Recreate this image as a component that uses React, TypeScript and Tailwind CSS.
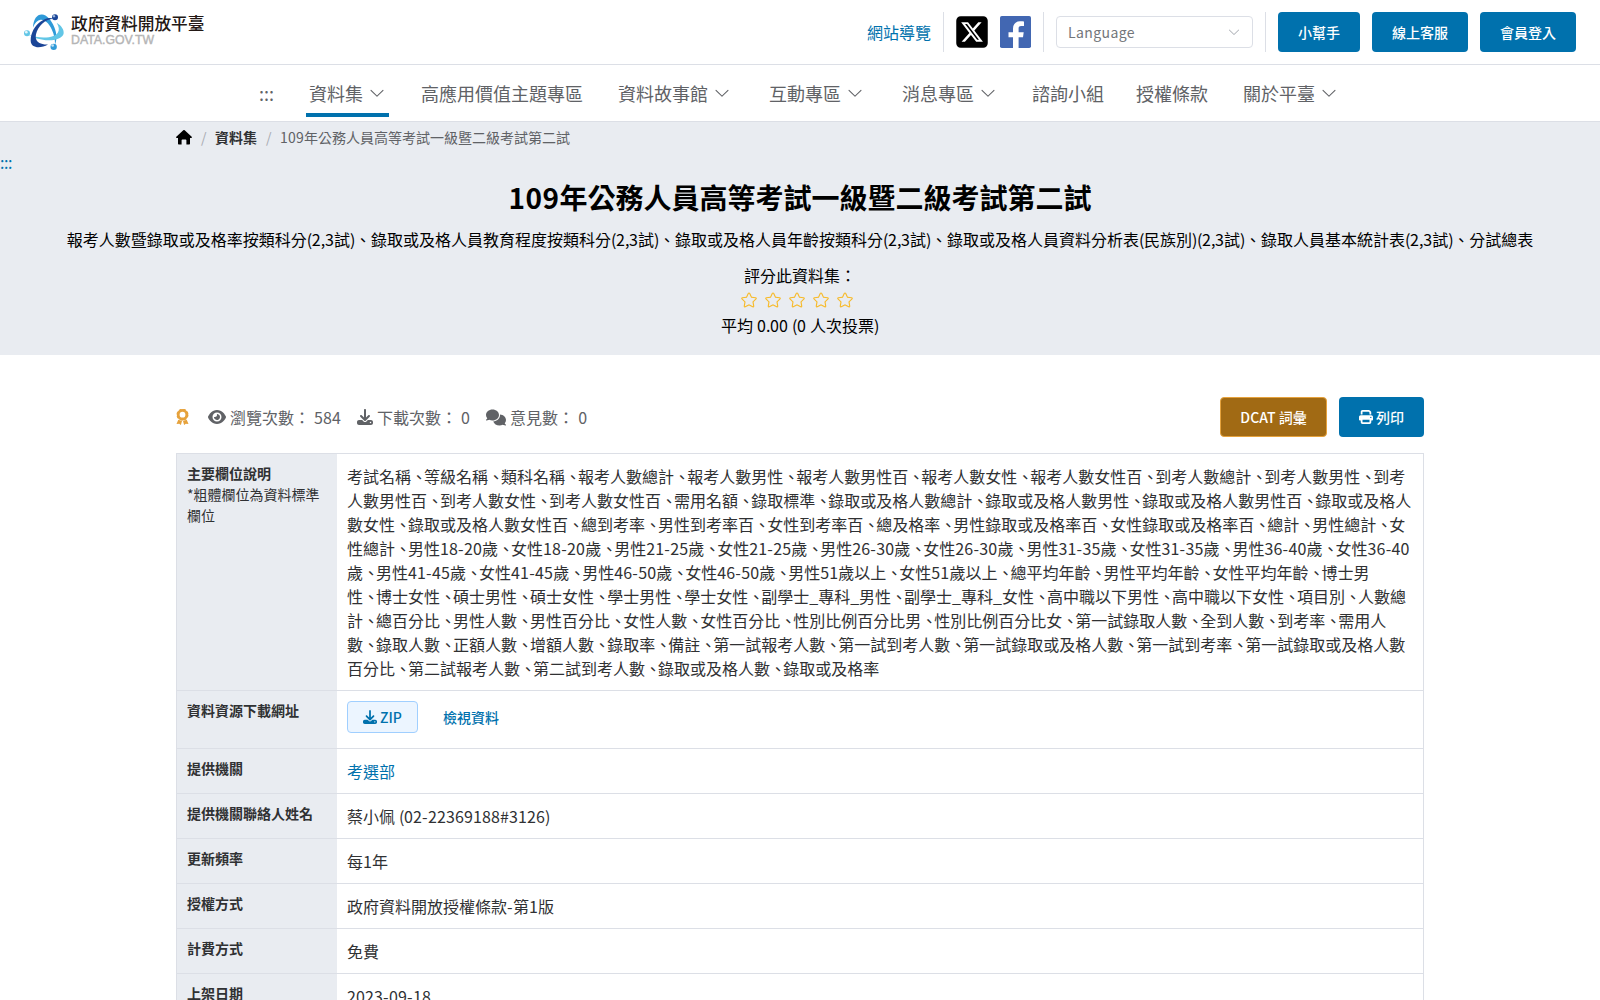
import React from "react";
import { FaEye, FaDownload, FaComments, FaPrint, FaSquareXTwitter } from "react-icons/fa6";

function ArrowDown({ className }: { className: string }) {
  return (
    <svg viewBox="0 0 1024 1024" fill="currentColor" className={className} aria-hidden="true">
      <path d="M831.872 340.864 512 652.672 192.128 340.864a30.592 30.592 0 0 0-42.752 0 29.12 29.12 0 0 0 0 41.6L489.664 714.24a32 32 0 0 0 44.672 0l340.288-331.712a29.12 29.12 0 0 0 0-41.728 30.592 30.592 0 0 0-42.752 0z" />
    </svg>
  );
}

function Star() {
  return (
    <svg viewBox="0 0 1024 1024" fill="#f7ba2a" className="h-[18px] w-[18px]" aria-hidden="true">
      <path d="m512 747.84 228.16 119.936a6.4 6.4 0 0 0 9.28-6.72l-43.52-254.08 184.512-179.904a6.4 6.4 0 0 0-3.52-10.88l-255.104-37.12L517.76 147.904a6.4 6.4 0 0 0-11.52 0L392.192 379.072l-255.104 37.12a6.4 6.4 0 0 0-3.52 10.88L318.08 606.976l-43.584 254.08a6.4 6.4 0 0 0 9.28 6.72L512 747.84zM313.6 924.48a70.4 70.4 0 0 1-102.144-74.24l37.888-220.928L88.96 472.96A70.4 70.4 0 0 1 128 352.896l221.76-32.256 99.2-200.96a70.4 70.4 0 0 1 126.208 0l99.2 200.96 221.824 32.256a70.4 70.4 0 0 1 39.04 120.064L774.72 629.376l37.888 220.928a70.4 70.4 0 0 1-102.144 74.24L512 820.096l-198.4 104.32z" />
    </svg>
  );
}

function Logo() {
  return (
    <svg viewBox="0 0 120 110" className="h-[37px] w-10 shrink-0" aria-hidden="true">
      <path d="M27 40C28 14 40 0 54 1c14 1 28 16 37 38 8 20 8 38 2 52 0-16-2-30-10-46C74 27 62 16 50 17c-10 1-17 9-23 23Z" fill="#2f9ad8" />
      <path d="M98 26c14 9 22 20 21 31-2 16-28 23-54 21-22-2-40-8-52-16 20 7 42 10 62 7 26-4 38-18 23-43Z" fill="#62c6e6" />
      <path d="M88 14C62 16 42 36 36 60c-4 18 6 31 36 31-22 13-52 12-52-12 0-22 12-44 30-57 12-8 26-14 38-8Z" fill="#1b4597" />
      <circle cx="93" cy="9" r="9" fill="#1b4597" />
      <circle cx="90" cy="6" r="3.5" fill="#9db8dc" />
      <circle cx="9" cy="57" r="9" fill="#62c6e6" />
      <circle cx="7" cy="54" r="4" fill="#e3f6fb" />
      <circle cx="89" cy="98" r="9.5" fill="#2f9ad8" />
      <circle cx="86" cy="94" r="4" fill="#c2e4f5" />
    </svg>
  );
}

function FacebookIcon() {
  return (
    <svg viewBox="0 0 31 32" className="h-8 w-[31px]" aria-hidden="true">
      <rect width="31" height="32" rx="1.8" fill="#4267b2" />
      <path d="M13 32V21.3H8.500v-5H13v-3.800C13 7.900 15.800 5.200 20 5.200c2 0 3.600.2 4 .3V10h-2.800c-2.200 0-2.600 1-2.600 2.600v3.700h5.100l-.7 5h-4.400V32Z" fill="#fff" />
    </svg>
  );
}

function HomeIcon() {
  return (
    <svg viewBox="0 0 16 15" className="h-[15px] w-4" aria-hidden="true">
      <path d="M7.300.3a1 1 0 0 1 1.400 0l7 6.400c.5.5.2 1.300-.5 1.300H14v5.400c0 .7-.4 1.100-1 1.100h-2.600V10.300c0-.5-.3-.8-.8-.8H6.400c-.5 0-.8.3-.8.8v4.200H3c-.6 0-1-.4-1-1.100V8H.8C.1 8-.2 7.200.3 6.700Z" fill="#000" />
    </svg>
  );
}

function MedalIcon() {
  return (
    <svg viewBox="0 0 12 16" className="h-4 w-[13px]" aria-hidden="true">
      <circle cx="6" cy="5.700" r="4.300" fill="none" stroke="#e6a23c" strokeWidth="2.800" />
      <circle cx="6" cy="5.700" r="5.400" fill="none" stroke="#e6a23c" strokeWidth="1.200" strokeDasharray="2.700 1.540" />
      <path d="M1.800 10.800 5.500 12 4.400 16 2.700 14.700 0 15ZM10.200 10.800 6.500 12 7.600 16 9.300 14.700 12 15Z" fill="#e6a23c" />
    </svg>
  );
}

/** Spaces Latin characters so that each one fills a whole number of pixels at 16px. */
function Snap({ text }: { text: string }) {
  return (
    <>
      {text.split(/(\d+|[- ]+|[(),.]+)/).map((part, i) => {
        if (!part) return null;
        if (/^\d/.test(part)) return <span key={i} className="tracking-[0.12px]">{part}</span>;
        if (/^[- ]/.test(part)) return <span key={i} className="tracking-[0.43px]">{part}</span>;
        if (/^[(),.]/.test(part)) return <span key={i} className="tracking-[-0.43px]">{part}</span>;
        return <React.Fragment key={i}>{part}</React.Fragment>;
      })}
    </>
  );
}

const nav = [
  { text: "資料集", arrow: true, cls: "ml-[33px] w-[83px]", active: true },
  { text: "高應用價值主題專區", arrow: false, cls: "ml-[29px] w-[168px]" },
  { text: "資料故事館", arrow: true, cls: "ml-[29px] w-[119px]" },
  { text: "互動專區", arrow: true, cls: "ml-8 w-[101px]" },
  { text: "消息專區", arrow: true, cls: "ml-8 w-[101px]" },
  { text: "諮詢小組", arrow: false, cls: "ml-[29px] w-[78px]" },
  { text: "授權條款", arrow: false, cls: "ml-[26px] w-[78px]" },
  { text: "關於平臺", arrow: true, cls: "ml-[29px] w-[101px]" },
];

const fields =
  "考試名稱 等級名稱 類科名稱 報考人數總計 報考人數男性 報考人數男性百 報考人數女性 報考人數女性百 到考人數總計 到考人數男性 到考人數男性百 到考人數女性 到考人數女性百 需用名額 錄取標準 錄取或及格人數總計 錄取或及格人數男性 錄取或及格人數男性百 錄取或及格人數女性 錄取或及格人數女性百 總到考率 男性到考率百 女性到考率百 總及格率 男性錄取或及格率百 女性錄取或及格率百 總計 男性總計 女性總計 男性18-20歲 女性18-20歲 男性21-25歲 女性21-25歲 男性26-30歲 女性26-30歲 男性31-35歲 女性31-35歲 男性36-40歲 女性36-40歲 男性41-45歲 女性41-45歲 男性46-50歲 女性46-50歲 男性51歲以上 女性51歲以上 總平均年齡 男性平均年齡 女性平均年齡 博士男性 博士女性 碩士男性 碩士女性 學士男性 學士女性 副學士_專科_男性 副學士_專科_女性 高中職以下男性 高中職以下女性 項目別 人數總計 總百分比 男性人數 男性百分比 女性人數 女性百分比 性別比例百分比男 性別比例百分比女 第一試錄取人數 全到人數 到考率 需用人數 錄取人數 正額人數 增額人數 錄取率 備註 第一試報考人數 第一試到考人數 第一試錄取或及格人數 第一試到考率 第一試錄取或及格人數百分比 第二試報考人數 第二試到考人數 錄取或及格人數 錄取或及格率".split(
    " ",
  );

function Row({ label, note, children }: { label: string; note?: string; children: React.ReactNode }) {
  return (
    <div className="flex border-t border-[#dcdfe6]">
      <div className="w-40 shrink-0 bg-[#e9ecf1] px-[10px] pt-[9px] pb-[11px] text-[14px] leading-[21px] text-[#303133]">
        <div className="font-bold">{label}</div>
        {note && <div>{note}</div>}
      </div>
      <div className="min-w-0 flex-1 p-[10px] text-base leading-6">{children}</div>
    </div>
  );
}

function BlueButton({ children, className }: { children: React.ReactNode; className: string }) {
  return (
    <button className={`flex h-10 items-center justify-center rounded bg-[#0071ad] text-[14px] font-medium text-white ${className}`}>
      {children}
    </button>
  );
}

export default function App() {
  return (
    <div className="h-[1000px] w-[1600px] overflow-hidden bg-white font-['Noto_Sans_CJK_TC',sans-serif] text-base leading-6 text-[#303133]">
      <header className="flex h-[65px] items-center justify-between border-b border-[#dcdfe6] px-6">
        <div className="flex items-center gap-[7px]">
          <Logo />
          <div className="-mt-[5px]">
            <div className="text-[16.7px] leading-[20px] font-medium text-[#231815]">政府資料開放平臺</div>
            <div className="mt-px font-['Liberation_Sans',sans-serif] text-[12.3px] leading-[13px] text-[#b5b5b6] [-webkit-text-stroke:0.4px_#b5b5b6]">DATA.GOV.TW</div>
          </div>
        </div>
        <div className="flex items-center">
          <a className="text-[#0071ad]">網站導覽</a>
          <div className="mx-3 h-10 w-px bg-[#dcdfe6]" />
          <div className="h-8 w-8 overflow-hidden text-black">
            <FaSquareXTwitter className="-mx-[2px] -mt-[2px] h-9 w-9" />
          </div>
          <div className="ml-3">
            <FacebookIcon />
          </div>
          <div className="mx-3 h-10 w-px bg-[#dcdfe6]" />
          <div className="flex h-8 w-[197px] items-center justify-between rounded border border-[#dcdfe6] pr-[11px] pl-[11px] text-[14px] tracking-[0.4px] text-[#73767a]">
            <span>Language</span>
            <ArrowDown className="h-[14px] w-[14px] text-[#a8abb2]" />
          </div>
          <div className="mx-3 h-10 w-px bg-[#dcdfe6]" />
          <BlueButton className="w-[82px]">小幫手</BlueButton>
          <BlueButton className="ml-3 w-24">線上客服</BlueButton>
          <BlueButton className="ml-3 w-24">會員登入</BlueButton>
        </div>
      </header>

      <nav className="flex h-[57px] border-b border-[#dcdfe6] pl-[259px] text-[18px] text-[#606266]">
        <span className="mt-4 w-[14px]">:::</span>
        {nav.map((n) => (
          <div key={n.text} className={`flex flex-col justify-between whitespace-nowrap ${n.cls}`}>
            <div className="mt-4 flex h-6 items-center pl-[3px]">
              {n.text}
              {n.arrow && <ArrowDown className="ml-[5px] h-[18px] w-[18px]" />}
            </div>
            {n.active && <div className="mb-1 h-1 bg-[#0071ad]" />}
          </div>
        ))}
      </nav>

      <section className="h-[233px] bg-[#e9ecf1] text-black">
        <div className="flex h-[30px] items-center pl-[176px] text-[14px] leading-[14px]">
          <HomeIcon />
          <span className="mx-[9px] w-[5px] text-center text-[#a8abb2]">/</span>
          <span className="font-bold text-[#303133]">資料集</span>
          <span className="mx-[9px] w-[5px] text-center text-[#a8abb2]">/</span>
          <span className="text-[#606266]">
            <span className="tracking-[0.23px]">109</span>年公務人員高等考試一級暨二級考試第二試
          </span>
        </div>
        <div className="h-6 leading-[20px] tracking-[-0.4px] text-[#0071ad]">:::</div>
        <h1 className="text-center text-[28px] leading-[42px] font-bold">
          <span className="tracking-[0.5px]">109</span>年公務人員高等考試一級暨二級考試第二試
        </h1>
        <p className="mt-[9px] text-center whitespace-nowrap">
          <Snap text="報考人數暨錄取或及格率按類科分(2,3試)、錄取或及格人員教育程度按類科分(2,3試)、錄取或及格人員年齡按類科分(2,3試)、錄取或及格人員資料分析表(民族別)(2,3試)、錄取人員基本統計表(2,3試)、分試總表" />
        </p>
        <p className="mt-3 text-center">評分此資料集：</p>
        <div className="mr-[6px] flex h-[26px] items-center justify-center gap-[6px]">
          <Star />
          <Star />
          <Star />
          <Star />
          <Star />
        </div>
        <p className="text-center">
          <Snap text="平均 0.00 (0 人次投票)" />
        </p>
      </section>

      <main className="mx-auto mt-[42px] w-[1248px]">
        <div className="flex h-10 items-center text-[#606266]">
          <MedalIcon />
          <FaEye className="mr-1 ml-[19px] h-4 w-[18px]" />
          <span>
            <Snap text="瀏覽次數： 584" />
          </span>
          <FaDownload className="mr-1 ml-4 h-4 w-4" />
          <span>
            <Snap text="下載次數： 0" />
          </span>
          <FaComments className="mr-1 ml-4 h-[17px] w-5" />
          <span>
            <Snap text="意見數： 0" />
          </span>
          <button className="ml-auto h-10 w-[107px] rounded border border-[#e6a23c] bg-[#a16a14] text-[14px] font-medium text-white">DCAT 詞彙</button>
          <BlueButton className="ml-3 w-[85px] gap-[3px]">
            <FaPrint className="h-[14px] w-[14px]" />
            列印
          </BlueButton>
        </div>

        <div className="mt-4 border-x border-[#dcdfe6]">
          <Row label="主要欄位說明" note="*粗體欄位為資料標準欄位">
            {/* A word joiner keeps each comma on the same line as the name after it. */}
            {fields.map((f, i) => (
              <React.Fragment key={i}>
                {i > 0 && <span className="tracking-[-3px]">、</span>}
                <Snap text={i > 0 ? "\u2060" + f : f} />
              </React.Fragment>
            ))}
          </Row>
          <Row label="資料資源下載網址">
            <div className="flex h-[37px] items-start text-[14px] font-medium text-[#0071ad]">
              <button className="flex h-8 w-[71px] items-center justify-center gap-[3px] rounded border border-[#a0cfff] bg-[#ecf5ff]">
                <FaDownload className="h-[14px] w-[14px]" />
                ZIP
              </button>
              <a className="ml-[25px] leading-8">檢視資料</a>
            </div>
          </Row>
          <Row label="提供機關">
            <a className="text-[#0071ad]">考選部</a>
          </Row>
          <Row label="提供機關聯絡人姓名">
            <Snap text="蔡小佩 (02-22369188#3126)" />
          </Row>
          <Row label="更新頻率">每1年</Row>
          <Row label="授權方式">
            <Snap text="政府資料開放授權條款-第1版" />
          </Row>
          <Row label="計費方式">免費</Row>
          <Row label="上架日期">
            <Snap text="2023-09-18" />
          </Row>
        </div>
      </main>
    </div>
  );
}
